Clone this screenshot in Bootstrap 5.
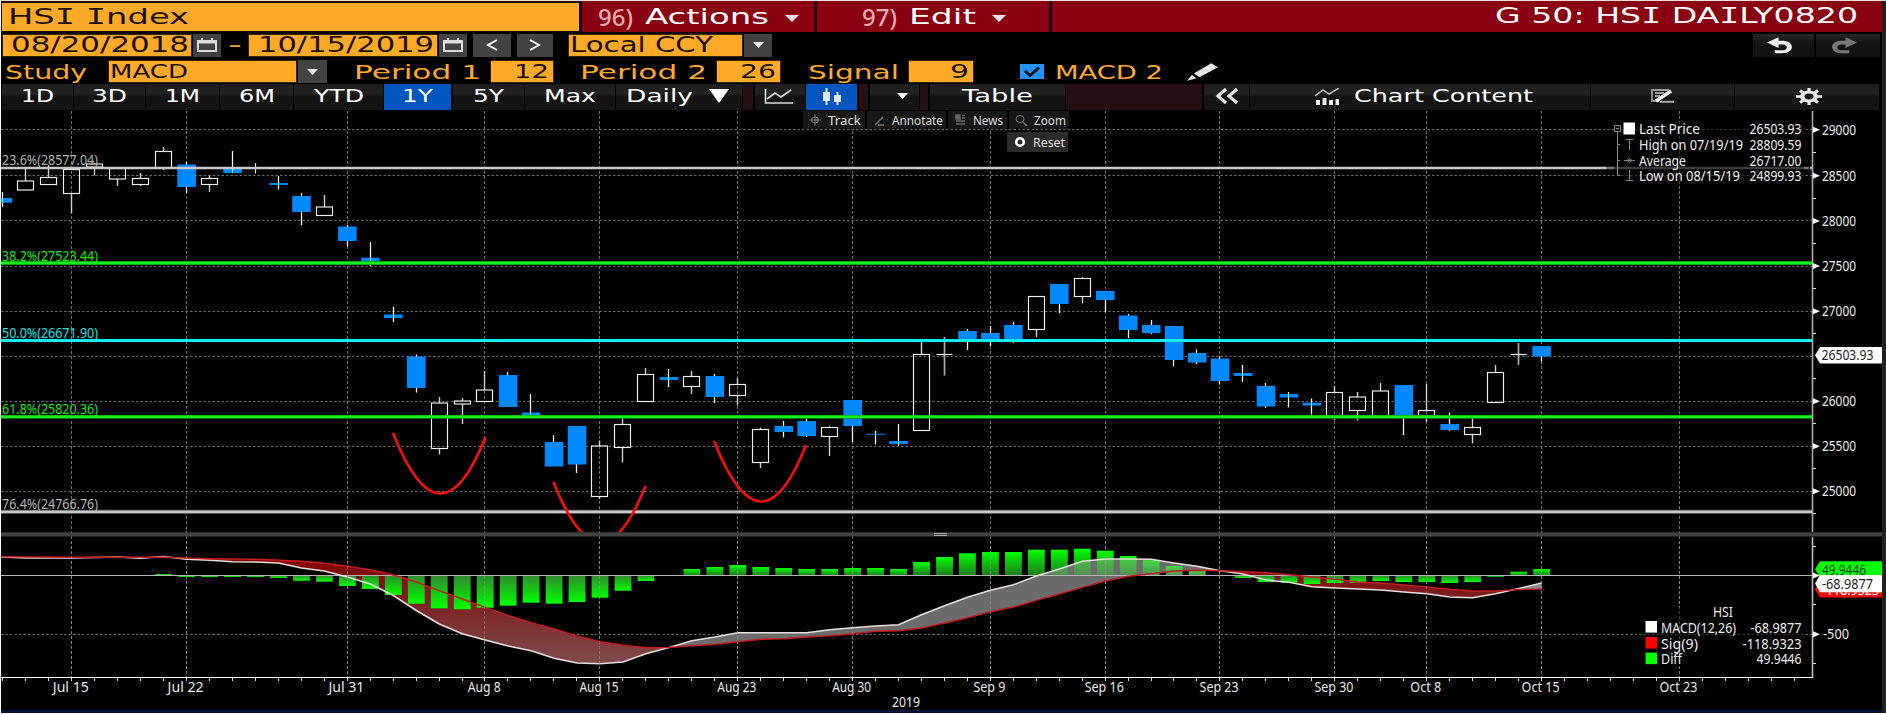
<!DOCTYPE html>
<html lang="en">
<head>
<meta charset="utf-8">
<title>HSI Index</title>
<link href="https://cdn.jsdelivr.net/npm/bootstrap@5.3.0/dist/css/bootstrap.min.css" rel="stylesheet">
<style>
:root{--amber:#ffa928;--crimson:#880012;--blue:#0055bf}
body{background:#000;font-family:"DejaVu Sans",sans-serif;color:#fff;overflow:hidden}
.terminal{width:1886px;height:714px;border-top:1px solid #e8dede;border-left:1px solid #fff;border-bottom:1px solid #fff;background:linear-gradient(#222,#222) right/4px 100% no-repeat #000;overflow:hidden}
.terminal>div{width:1881px}
.grid-row{display:grid;grid-template-rows:100%;align-items:center;white-space:nowrap}
.fit{display:inline-block;transform-origin:0 50%;white-space:nowrap}
.cap-i{font-family:"DejaVu Sans Mono",monospace}
/* title bar */
.title-row{grid-template-columns:581px 235px 235px 1fr;height:31px;font-size:22px;line-height:29px;background:var(--crimson)}
.title-row>div{height:31px;border-right:3px solid #22060a}
.title-row>div:last-child{border:0}
.title-row .ticker{background:var(--amber);color:#1c1000;border:solid #160c00;border-width:2px 3px 1px 1px;line-height:27px;padding-left:6px}
.num{color:#eba8ad;font-family:"Noto Sans",sans-serif;font-weight:500;font-size:24px}
.edit-menu{padding-left:45px}
/* date row */
.date-row{grid-template-columns:190px 30px 26px 190px 30px 44px 42px 189px 30px 1fr 63px 66px;height:24px;margin-top:1px;padding-left:1px;font-size:20.5px;line-height:22px}
.amber{background:var(--amber);color:#1c1000;height:23px;line-height:20px;border:1px solid #3a2400;overflow:hidden}
.grey{background:#424242;height:23px;margin:0 1px;display:flex;align-items:center;justify-content:center}
.dark-btn{background:linear-gradient(#262626,#131313 45%,#121212);height:23px;display:flex;align-items:center;justify-content:center;padding-right:8px;margin-right:2px}
/* study row */
.study-row{grid-template-columns:106px 189px 31px 162px 64px 162px 65px 127px 66px 70px 126px 50px;height:23px;margin-top:3px;padding-left:1px;font-size:19px;line-height:22px;color:var(--amber)}
/* range tabs */
.tab-row{grid-template-columns:72px 72px 74px 74px 90px 69px 72px 91px 127px 12px 51px 53px 11px 50px 10px 136px 138px 46px 341px 144px 145px;height:26px;margin-top:1px;padding-left:1px;font-size:18.5px;background:#000}
.tab-row>div{height:26px;line-height:22px;padding-bottom:2px;background:linear-gradient(#1d1d1d,#222 35%,#121212 50%,#141414);border-right:1px solid #050505;display:flex;align-items:center;justify-content:center}
.tab-row>.on{background:var(--blue);border-right-width:2px}
.tab-row>.maroon{background:#241012;border-right:2px solid #000}
/* chart */
.stage{position:relative;height:602px;margin-top:1px}
.stage>svg{display:block;margin-left:-1px}
.chart-tools{position:absolute;left:802px;top:0;font:13px/18px "Noto Sans",sans-serif}
.tool{height:18px;background:#171717;color:#ddd;display:flex;align-items:center;margin-right:2px}
.tool svg{flex:none}
.chart-tools .reset-tool{background:#2b2b2b;margin-top:3px;margin-left:204px;width:61px;height:20px}
text{font-family:"Noto Sans",sans-serif;font-size:13.6px;fill:#eee}
</style>
</head>
<body>
<div class="terminal">
  <div class="grid-row title-row">
    <div class="ticker"><span class="fit" data-w="181">HS<span class="cap-i">I</span> <span class="cap-i">I</span>ndex</span></div>
    <div class="d-flex align-items-center ps-3"><span class="fit num" data-w="35">96)</span><span class="fit ms-2 ps-1" data-w="124">Actions</span><svg class="ms-3 mt-1" width="14" height="7"><path d="M0 0H14L7 7Z" fill="#eadfe0"/></svg></div>
    <div class="edit-menu d-flex align-items-center"><span class="fit num" data-w="35">97)</span><span class="fit ms-2 ps-1" data-w="67">Edit</span><svg class="ms-3 mt-1" width="14" height="7"><path d="M0 0H14L7 7Z" fill="#eadfe0"/></svg></div>
    <div class="text-end pe-4"><span class="fit" data-w="363">G 50: HS<span class="cap-i">I</span> DA<span class="cap-i">I</span>LY0820</span></div>
  </div>

  <div class="grid-row date-row">
    <div class="amber ps-2"><span class="fit" data-w="178">08/20/2018</span></div>
    <div class="grey"><svg width="20" height="14" fill="none" stroke="#ddd" stroke-width="2"><path d="M1 3H19V13H1Z"/><path d="M1 4H19" stroke-width="3"/><path d="M5 0V3M15 0V3"/></svg></div>
    <div class="text-center" style="color:var(--amber)"><span class="fit" data-w="14">-</span></div>
    <div class="amber" style="padding-left:9px"><span class="fit" data-w="176">10/15/2019</span></div>
    <div class="grey"><svg width="20" height="14" fill="none" stroke="#ddd" stroke-width="2"><path d="M1 3H19V13H1Z"/><path d="M1 4H19" stroke-width="3"/><path d="M5 0V3M15 0V3"/></svg></div>
    <div class="grey" style="margin-left:5px"><svg width="12" height="12" fill="none" stroke="#fff" stroke-width="2"><path d="M11 1L2 6L11 11"/></svg></div>
    <div class="grey" style="margin-left:5px"><svg width="12" height="12" fill="none" stroke="#fff" stroke-width="2"><path d="M1 1L10 6L1 11"/></svg></div>
    <div class="amber" style="margin-left:14px;padding-left:1px"><span class="fit" data-w="143">Local CCY</span></div>
    <div class="grey"><svg width="11" height="6"><path d="M0 0H11L5.500 6Z" fill="#e8e8e8"/></svg></div>
    <div></div>
    <div class="dark-btn"><svg width="26" height="17" viewBox="0 0 27 17"><path d="M0 5.500L12 0V3.500H17C29 4 29 16.500 16 16.500H8V13.500H16C22 13.500 22 7.500 16 7.500H12V11Z" fill="#eee"/></svg></div>
    <div class="dark-btn"><svg width="26" height="17" viewBox="0 0 27 17"><path transform="matrix(-1 0 0 1 27 0)" d="M0 5.500L12 0V3.500H17C29 4 29 16.500 16 16.500H8V13.500H16C22 13.500 22 7.500 16 7.500H12V11Z" fill="#777"/></svg></div>
  </div>

  <div class="grid-row study-row">
    <div style="padding-left:3px"><span class="fit" data-w="82">Study</span></div>
    <div class="amber" style="padding-left:1px"><span class="fit" data-w="78">MACD</span></div>
    <div class="grey"><svg width="11" height="6"><path d="M0 0H11L5.500 6Z" fill="#e8e8e8"/></svg></div>
    <div style="padding-left:26px"><span class="fit" data-w="127">Period 1</span></div>
    <div class="amber text-end" style="padding-right:4px"><span class="fit" data-w="35">12</span></div>
    <div style="padding-left:26px"><span class="fit" data-w="127">Period 2</span></div>
    <div class="amber text-end" style="padding-right:4px"><span class="fit" data-w="36">26</span></div>
    <div style="padding-left:27px"><span class="fit" data-w="91">Signal</span></div>
    <div class="amber text-end" style="padding-right:4px"><span class="fit" data-w="19">9</span></div>
    <div class="d-flex justify-content-end"><svg width="24" height="15"><rect width="24" height="15" fill="#2492f7"/><path d="M5 7L10 11.500L19 3.500" fill="none" stroke="#08131f" stroke-width="3"/></svg></div>
    <div style="padding-left:11px"><span class="fit" data-w="108">MACD 2</span></div>
    <div style="padding-left:17px"><svg class="d-block" width="31" height="18" viewBox="0 0 32 18"><path d="M0 18L5 12L10 15.500Z" fill="#e6e6e6"/><path d="M7 10.500L25 0L32 4L13 14.500Z" fill="#e6e6e6"/></svg></div>
  </div>

  <div class="grid-row tab-row">
    <div><span class="fit" data-w="33">1D</span></div>
    <div><span class="fit" data-w="35">3D</span></div>
    <div><span class="fit" data-w="35">1M</span></div>
    <div><span class="fit" data-w="36">6M</span></div>
    <div><span class="fit" data-w="50">YTD</span></div>
    <div class="on"><span class="fit" data-w="31">1Y</span></div>
    <div><span class="fit" data-w="31">5Y</span></div>
    <div><span class="fit" data-w="52">Max</span></div>
    <div class="pe-1"><span class="fit" data-w="67">Daily</span><svg class="ms-3" width="20" height="14"><path d="M0 0H20L10 14Z" fill="#fff"/></svg></div>
    <div class="maroon"></div>
    <div class="pe-1"><svg width="29" height="15" fill="none" stroke="#ddd" stroke-width="1.600"><path d="M1.500 0V14H29M3 10L11 4L17 8L27 1"/></svg></div>
    <div class="on"><svg width="18" height="17" fill="#dce6f5"><path d="M0 4H7V13H0ZM2.500 0H4.500V17H2.500ZM11 7H18V14H11ZM13.500 4H15.500V17H13.500Z"/></svg></div>
    <div class="maroon"></div>
    <div><svg class="ms-3" width="11" height="6"><path d="M0 0H11L5.500 6Z" fill="#fff"/></svg></div>
    <div class="maroon"></div>
    <div><span class="fit" data-w="71">Table</span></div>
    <div class="maroon"></div>
    <div><svg width="24" height="16" fill="none" stroke="#e6e6e6" stroke-width="3.200"><path d="M11 1L3 8L11 15M22 1L14 8L22 15"/></svg></div>
    <div style="padding-left:7px"><svg width="25" height="17"><path d="M0 8L8 2L14 6L24 0" fill="none" stroke="#bbb" stroke-width="1.500"/><path d="M1 12H5V17H1ZM7.500 10H11.500V17H7.500ZM14 12H18V17H14ZM20.500 11H24V17H20.500Z" fill="#eee"/></svg><span class="fit" style="margin-left:14px" data-w="179">Chart Content</span></div>
    <div><svg width="24" height="14" fill="none"><path d="M18 1H1V12H8M4 4H13M4 7H9" stroke="#999" stroke-width="1.800"/><path d="M5 12L20 2" stroke="#eee" stroke-width="3.500"/><path d="M9 12.800H23" stroke="#aaa" stroke-width="2"/></svg></div>
    <div class="ps-1"><svg width="26" height="17" viewBox="-13 -8.500 26 17"><g stroke="#e6e6e6" stroke-width="4"><path d="M-13 0H13" stroke-width="2.600"/><path d="M0 -8.500V8.500M-9 -6L9 6M-9 6L9 -6" stroke-width="3.200"/></g><ellipse rx="9" ry="6" fill="#e6e6e6"/><ellipse rx="4.500" ry="3" fill="#161616"/></svg></div>
  </div>

  <div class="stage">
    <svg id="chart" width="1883" height="602" viewBox="0 111 1883 602"></svg>
    <div class="chart-tools">
      <div class="d-flex">
        <div class="tool" style="width:62px"><svg width="25" height="12" fill="none" stroke="#777"><ellipse cx="12" cy="6" rx="3.500" ry="3"/><path d="M6 6H18M12 0V12"/></svg><span class="fit" data-w="33">Track</span></div>
        <div class="tool" style="width:79px"><svg width="25" height="12" fill="none" stroke="#777"><path d="M8 11L16 3M11 11H17" stroke-width="1.300"/></svg><span class="fit" data-w="51">Annotate</span></div>
        <div class="tool" style="width:59px"><svg width="25" height="12" fill="none" stroke="#666" stroke-width="1.500"><path d="M8 2.500H12M14 1.500H17M14 4H17M8 7H17M8 10H17"/><path d="M8 1H12V5H8Z" fill="#666"/></svg><span class="fit" data-w="30">News</span></div>
        <div class="tool" style="width:60px"><svg width="25" height="12" fill="none" stroke="#777"><ellipse cx="11" cy="5" rx="4" ry="3.500"/><path d="M14 8L18 12" stroke-width="1.500"/></svg><span class="fit" data-w="32">Zoom</span></div>
      </div>
      <div class="tool reset-tool"><svg width="26" height="12"><ellipse cx="13" cy="6" rx="3.800" ry="3.800" fill="none" stroke="#fff" stroke-width="2.600"/></svg><span class="fit" data-w="32">Reset</span></div>
    </div>
  </div>
</div>
<script src="https://cdn.jsdelivr.net/npm/bootstrap@5.3.0/dist/js/bootstrap.bundle.min.js"></script>
<script>
// Stretch each label to its set width.
document.querySelectorAll('.fit').forEach(el => {
  const cs = getComputedStyle(el), n = el.getBoundingClientRect().width - parseFloat(cs.paddingLeft), w = +el.dataset.w;
  el.style.transform = `scaleX(${w / n})`;
  el.style.transformOrigin = cs.paddingLeft + ' 50%';
  el.style.marginRight = (w - n) + 'px';
});

const X = i => 71.8 + 22.966 * i;
const G = i => Math.round(X(i) - .7) + .5;
const out = [];
const line = (x1, y1, x2, y2, c, w = 1, extra = '') => out.push(`<line x1="${x1}" y1="${y1}" x2="${x2}" y2="${y2}" stroke="${c}" stroke-width="${w}" ${extra}/>`);
const rect = (x, y, w, h, f, extra = '') => out.push(`<rect x="${x}" y="${y}" width="${w}" height="${h}" fill="${f}" ${extra}/>`);
const text = (x, y, s, w, c = '#eee', anchor = 'start') => out.push(`<text x="${x}" y="${y}" style="fill:${c}" text-anchor="${anchor}" textLength="${w}" lengthAdjust="spacingAndGlyphs">${s}</text>`);

out.push(`<defs>
<linearGradient id="up" x1="0" y1="0" x2="0" y2="1"><stop offset="0" stop-color="#00ff00"/><stop offset="1" stop-color="#1f7a1f"/></linearGradient>
<linearGradient id="down" x1="0" y1="0" x2="0" y2="1"><stop offset="0" stop-color="#2f8a2f"/><stop offset="1" stop-color="#00ff00"/></linearGradient>
<linearGradient id="loss" gradientUnits="userSpaceOnUse" x1="0" y1="555" x2="0" y2="665"><stop offset="0" stop-color="#840000"/><stop offset=".4" stop-color="#7d2023"/><stop offset="1" stop-color="#804c4c"/></linearGradient>
<clipPath id="priceClip"><rect x="1" y="111" width="1812" height="421"/></clipPath></defs>`);

// grid
[129.5,175.5,220.5,266.5,311.5,356.5,401.5,446.5,491.5,634.5].forEach(y => line(1, y, 1812, y, '#6a6a6a', 1, 'stroke-dasharray="2.500 2"'));
const dates = [[0,'Jul 15',36],[5,'Jul 22',36],[12,'Jul 31',36],[18,'Aug 8',33],[23,'Aug 15',39],[29,'Aug 23',39],[34,'Aug 30',39],[40,'Sep 9',32],[45,'Sep 16',39],[50,'Sep 23',39],[55,'Sep 30',39],[59,'Oct 8',31],[64,'Oct 15',38],[70,'Oct 23',38]];
dates.forEach(([i]) => line(G(i), 111, G(i), 677, '#707070', 1, 'stroke-dasharray="3 2"'));

// candles: index, kind (1 falling, 0 rising, 2 doji), body top, body bottom, high, low
const candles = [[-3,1,198,202.7,192,207],[-2,0,181,190,169,190],[-1,0,177.5,184.5,165,184],[0,0,169.5,193.5,168,213],[1,0,164,167,163,175.5],[2,0,168.5,179,168,186],[3,0,178.5,184.5,173,186],[4,0,151.5,168,147,170],[5,1,164.5,187,162,193],[6,0,178.5,184.5,175.5,192],[7,1,169,173,151,173],[8,1,168,168.5,163,173.5],[9,1,183,185,176,189.5],[10,1,196,212,193,225],[11,0,207,215.5,195,215],[12,1,226.5,241,225,246.5],[13,1,257.7,261,242,266],[14,1,314.5,318,306.5,322],[15,1,356.5,388,354.5,392.5],[16,0,403,448.5,397,454.5],[17,0,401,404,398,424],[18,0,390,401.5,371,401],[19,1,375,407,372,407],[20,1,412.5,416,394,416],[21,1,442,466.5,435,466],[22,1,426,464.5,426,473],[23,0,446,496.5,440.5,499],[24,0,424.5,447.5,417.5,462.5],[25,0,374.5,401.5,368,401],[26,1,377,380,369,387],[27,0,376.5,386.5,371,394],[28,1,376,397,374,403],[29,0,384.5,395.5,378,405.5],[30,0,429.5,462.5,427.5,468],[31,1,426,432,421,437.5],[32,1,421,436,418.5,437],[33,0,427.5,436.5,426,456],[34,1,400,426,400,442],[35,1,433.7,434.7,431,444.5],[36,1,441,444,424,446],[37,0,354.5,430.5,342,430],[38,2,354.5,354.5,337,375.5],[39,1,331,339,329,350],[40,1,333,339,326,346],[41,1,325,339,322,343],[42,0,296.5,329.5,296,337],[43,1,284,304,284,313],[44,0,278.5,296.5,277,303.5],[45,1,291,300,291,312],[46,1,315.5,330,314,338],[47,1,325,333,320,334],[48,1,326,360,326,366.5],[49,1,353,362.5,349.5,364],[50,1,358.5,381,356.5,384.5],[51,1,373,376,365,382],[52,1,386,406.5,383,408],[53,1,394,397.5,392,407.5],[54,1,402.7,405.5,398.5,414.5],[55,0,392.5,415.5,386,420],[56,0,397,410.5,392,420.5],[57,0,391,416,383,416],[58,1,385,416,385,435],[59,0,410.5,415.5,384,422],[60,1,424,430,412.5,431],[61,0,427.5,434.5,417.5,443.5],[62,0,372.5,402.5,365,402],[63,2,354.5,354.5,343,365],[64,1,346,356.5,346,361.5]];
out.push('<g clip-path="url(#priceClip)">');
candles.forEach(([i, kind, t, b, hi, lo]) => {
  const x = X(i), xm = G(i);
  if (i === 8) { line(xm, hi, xm, lo, '#ddd', 1.2); return; }
  if (kind === 1) {
    line(xm, hi, xm, lo, '#f2f2f2', 1.3);
    rect(x - 9.3, t, 18.6, b - t, '#0088ff');
    if (b - t < 5) line(xm, t, xm, b, '#b8dcff', 1);
  } else if (kind === 0) {
    line(xm, hi, xm, t, '#d0d0d0', 1.4); line(xm, b, xm, lo, '#d0d0d0', 1.4);
    rect(xm - 8, t, 16, b - t, 'none', 'stroke="#f0f0f0" stroke-width="1.150"');
  } else {
    line(xm, hi, xm, lo, '#aaa', 1.7); line(x - 8, t, x + 8, t, '#eee', 1.2);
  }
});
out.push('</g>');

// retracement levels
line(1, 168, 1606, 168, '#c8c8c8', 2.6);
line(1606, 168, 1809, 168, '#777', 2.6); line(1810, 168, 1812, 168, '#c8c8c8', 2.6);
line(1, 340.5, 1812, 340.5, '#12eef5', 3);
line(1, 511.8, 1812, 511.8, '#707070', 4); line(1, 511.8, 1812, 511.8, '#c8c8c8', 2.2);
[263, 416.8].forEach(y => { line(1, y, 1812, y, '#089008', 3.8); line(1, y, 1812, y, '#16f01c', 2.4); });
text(2, 165, '23.6%(28577.04)', 96, '#b4b4b4');
text(2, 260.5, '38.2%(27523.44)', 96, '#1be61b');
text(2, 337.5, '50.0%(26671.90)', 96, '#20e0e0');
text(2, 414, '61.8%(25820.36)', 96, '#1be61b');
text(2, 509, '76.4%(24766.76)', 96, '#b4b4b4');

// hand-drawn troughs
out.push('<g fill="none" stroke="#f01010" stroke-width="2.700" clip-path="url(#priceClip)"><path d="M393 433Q440 552 485.500 437"/><path d="M553.500 482Q600 600 645.500 486"/><path d="M714 441Q761 560 806 445"/></g>');

// MACD study
const pts = a => a.map(([i, y]) => [X(i), y]);
const macd = pts([[-3.08,557],[-2,558],[0,558],[2,557],[3,558.3],[4,556.5],[5,559.3],[6,560.3],[7,561.7],[8,562],[9,563],[10,568],[11,571],[12,577],[13,584],[14,595.5],[15,610.5],[16,624],[17,633.7],[18,640],[19,646],[20,650.7],[21,658.3],[22,663],[23,663.7],[24,662],[25,653.7],[26,647.5],[27,640.7],[28,637],[29,632.7],[30,632.7],[31,632.7],[32,632.7],[33,629.7],[34,627.7],[35,626],[36,624.7],[37,614.7],[38,605.7],[39,597.3],[40,590.3],[41,584.7],[42,576],[43,569],[44,561.3],[45,559],[46,559],[47,559.3],[48,563],[49,566.3],[50,570.7],[51,574],[52,580],[53,582.3],[54,586.7],[55,588],[56,589],[57,590],[58,592],[59,593.7],[60,597],[61,597.7],[62,593.7],[63,588.5],[64,583]]);
const sig = pts([[-3.08,556.7],[0,557.3],[4,557.3],[6,558.7],[8,559.3],[10,561.3],[11,563.3],[12,566.3],[13,569.7],[14,575],[15,582],[16,590.7],[17,599],[18,607.3],[19,615.3],[20,622.7],[21,629],[22,636],[23,641.7],[24,645.3],[25,647.7],[26,647.5],[27,645.7],[28,644.3],[29,641.7],[30,639.3],[31,638.7],[32,637],[33,635.7],[34,633.7],[35,631.3],[36,630.7],[37,628],[38,623],[39,617.7],[40,611.7],[41,607],[42,600.3],[43,594],[44,587.3],[45,581],[46,576.3],[47,573.7],[48,571],[49,570.3],[50,570.7],[51,571.7],[52,572.7],[53,574.7],[54,577],[55,579],[56,582],[57,583],[58,585],[59,587],[60,589.3],[61,591],[62,591],[63,589.5],[64,589]]);
const area = (a, b, fill) => {
  const inside = p => p[0] >= X(a) - 1 && p[0] <= X(b) + 1;
  const ring = macd.filter(inside).concat(sig.filter(inside).reverse());
  out.push(`<polygon points="${ring.map(p => p.join()).join(' ')}" fill="${fill}"/>`);
};
area(-4, 26, 'url(#loss)'); area(26, 50, '#6c6c6c'); area(50, 63, 'url(#loss)'); area(63, 64, '#8a8a8a');

const diff = {4:574,5:577,6:577,7:577,8:577,9:578,10:580.7,11:581.7,12:586,13:589,14:595,15:603.7,16:608.3,17:609.3,18:607.7,19:605.7,20:602.7,21:603.7,22:602,23:597.7,24:590.7,25:581,26:575,27:569,28:567,29:565,30:567,31:568,32:569,33:569,34:568,35:568,36:569,37:562,38:557,39:553.3,40:552,41:552,42:549.7,43:549.7,44:548.7,45:550.7,46:556,47:560.3,48:566,49:570.7,51:578,52:582,53:582.7,54:584,55:583,56:582.7,57:581,58:582,59:582,60:583,61:582,62:576.7,63:571.7,64:569};
for (const i in diff) {
  const y = diff[i], up = y < 575.5, x = X(+i) - 8.4;
  rect(x, up ? y : 575.5, 16.8, Math.abs(y - 575.5), up ? 'url(#up)' : 'url(#down)');
}
// part of each column that the study band overlays
out.push('<clipPath id="band"><polygon points="' + macd.slice(38).filter(p => p[0] < X(50) + 1).concat([[X(50), 575], [X(42), 575]]).map(p => p.join()).join(' ') + '"/></clipPath><g clip-path="url(#band)">');
for (let i = 43; i < 50; i++) rect(X(i) - 8.4, diff[i], 16.8, 575.5 - diff[i], '#a8a8a8', 'opacity=".4"');
out.push('</g>');
line(1, 575.5, 1812, 575.5, '#b5b5b5', 1.1);
const poly = (p, c, w) => out.push(`<polyline points="${p.map(q => q.join()).join(' ')}" fill="none" stroke="${c}" stroke-width="${w}"/>`);
poly(macd, '#e9dede', 1.5); poly(sig, '#c41c22', 1.4);
dates.forEach(([i]) => line(G(i), 541, G(i), 677, '#999', 1, 'stroke-dasharray="3 2" opacity=".5"'));

// pane divider
rect(1, 532.3, 1881, 4.2, '#434343');
line(934, 533.5, 947, 533.5, '#aaa', 1); line(934, 535.5, 947, 535.5, '#aaa', 1);

// axes
line(1812.5, 111, 1812.5, 532, '#aaa', 1.6); line(1812.5, 537, 1812.5, 678, '#bbb', 1.6);
line(1, 677.5, 1813, 677.5, '#fff', 1.2);
for (let i = -3; i <= 75; i++) line(G(i), 678, G(i), 681, '#ddd', 1);
dates.forEach(([i, s, w]) => text(X(i) - 1, 692.2, s, w, '#e8e8e8', 'middle'));
text(906, 707.2, '2019', 28, '#e8e8e8', 'middle');
[[129.7,'29000'],[175.7,'28500'],[220.9,'28000'],[266,'27500'],[311.3,'27000'],[401.3,'26000'],[446.3,'25500'],[491.3,'25000']].forEach(([y, s]) => {
  out.push(`<path d="M1813 ${y - 3}L1820 ${y}L1813 ${y + 3}Z" fill="#fff"/>`);
  text(1822, y + 5, s, 34);
});
[152.5,198.5,243.5,288.5,333.5,378.5,423.5,468.5,513.5,546.5,604.5,663.5].forEach(y => line(1813, y, 1816, y, '#ddd', 1));
[575.5, 634.3].forEach(y => out.push(`<path d="M1813 ${y - 3}L1820 ${y}L1813 ${y + 3}Z" fill="#fff"/>`));
text(1823, 639.2, '-500', 26);

// value flags
const flag = (y1, y2, c) => out.push(`<path d="M1882 ${y1}H1820L1815 ${(y1 + y2) / 2}L1820 ${y2}H1882Z" fill="${c}"/>`);
flag(347, 363.6, '#fff'); text(1821.5, 360.4, '26503.93', 52, '#222');
flag(561.3, 577, '#0f0'); text(1822, 575, '49.9446', 44, '#0a3d0a');
flag(581, 597.6, '#ee0a0a'); text(1822, 595.3, '-118.9323', 57, '#fff');
flag(575, 592.2, '#fff'); text(1822, 589.3, '-68.9877', 51, '#222');

// price legend
rect(1614, 121, 190, 64, '#000', 'opacity=".5"');
out.push('<g fill="none" stroke="#888"><path d="M1614.500 125.500H1620.500V131.500H1614.500ZM1616 128.500H1619M1617.500 132V175.500H1620M1617.500 144.500H1620M1617.500 160.500H1620"/><path d="M1626 139.500H1633M1629.500 139.500V150M1624 160.500H1635M1629.500 158.500L1632 160.500L1629.500 162.500L1627 160.500ZM1629.500 170V180.500M1626 180.500H1633"/></g>');
rect(1623.5, 122.5, 11.5, 12, '#fff');
[[133.9,'Last Price',61,'26503.93'],[149.7,'High on 07/19/19',104,'28809.59'],[165.6,'Average',47,'26717.00'],[181.2,'Low on 08/15/19',101,'24899.93']].forEach(([y, s, w, v]) => { text(1639, y, s, w); text(1801.5, y, v, 52, '#eee', 'end'); });

// study legend
rect(1644, 607, 160, 60, '#000', 'opacity=".5"');
text(1713, 617, 'HSI', 20);
[[632.6,'MACD(12,26)',75,'-68.9877',51,'#fff',621],[648.5,'Sig(9)',37,'-118.9323',59,'#f00',637],[663.8,'Diff',21,'49.9446',45,'#0f0',652.6]].forEach(([y, s, w, v, vw, c, sy]) => {
  rect(1645.5, sy, 11.5, 11.6, c); text(1661, y, s, w); text(1801.5, y, v, vw, '#eee', 'end');
});
rect(1, 710, 1882, 3, '#04123c');
document.getElementById('chart').innerHTML = out.join('');
</script>
</body>
</html>
